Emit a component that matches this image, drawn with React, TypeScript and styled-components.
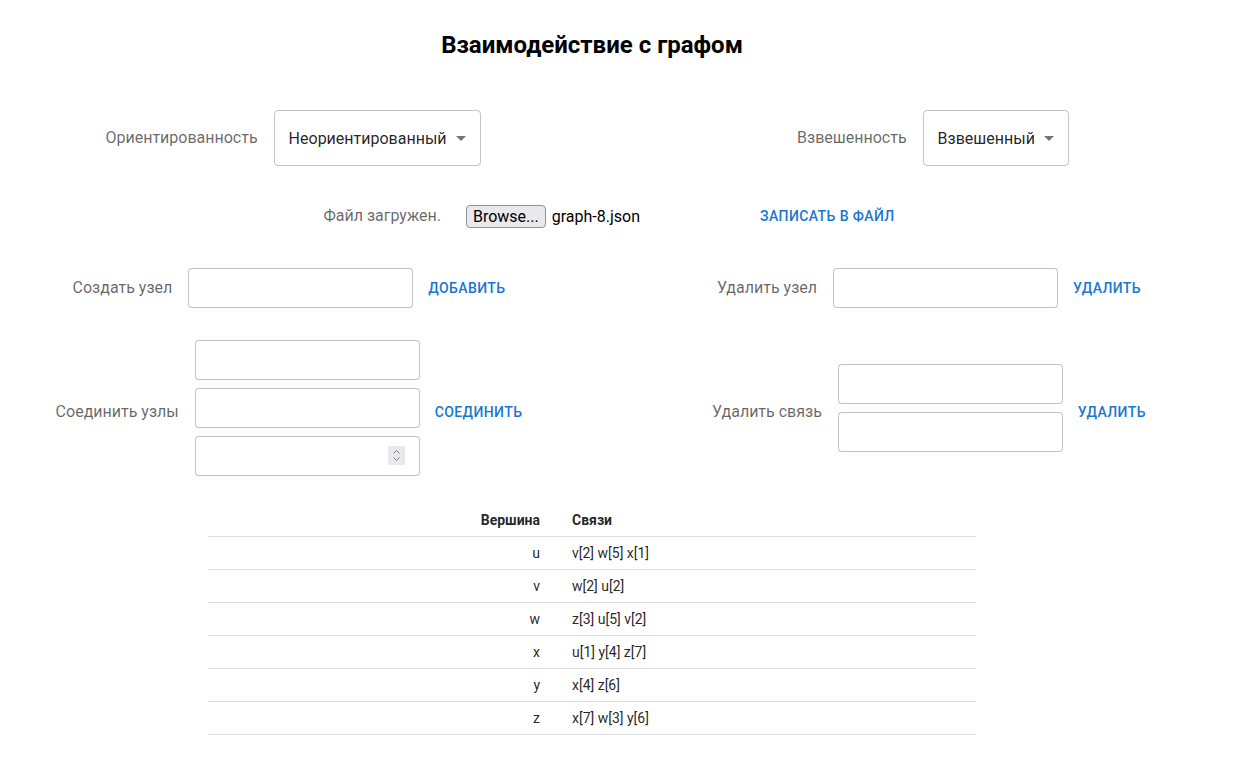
import React from 'react';
import styled, { createGlobalStyle } from 'styled-components';

const GlobalStyle = createGlobalStyle`
  * { box-sizing: border-box; }
  body {
    margin: 0;
    background: #fff;
    font-family: Roboto, "Noto Sans", sans-serif;
    color: rgba(0, 0, 0, 0.87);
  }
`;

const Page = styled.div`
  width: 1235px;
  padding-top: 29px;
  padding-bottom: 26px;
`;

const Centered = styled.div`
  width: 1184px;
  display: flex;
  flex-direction: column;
  align-items: center;
`;

const Title = styled.h1`
  margin: 0;
  font-size: 24px;
  line-height: 32px;
  font-weight: 700;
  color: #000;
`;

const TwoCols = styled.div<{ $top: number }>`
  display: grid;
  grid-template-columns: 580px 560px;
  column-gap: 70px;
  margin-top: ${p => p.$top}px;
  margin-left: 3px;
`;

const Group = styled.div`
  display: flex;
  align-items: center;
  justify-content: center;
  gap: 16px;
`;

const Label = styled.span`
  font-size: 16px;
  line-height: 24px;
  color: rgba(0, 0, 0, 0.6);
  white-space: nowrap;
`;

const SelectBox = styled.div`
  position: relative;
  height: 56px;
  display: flex;
  align-items: center;
  padding: 0 33px 0 14px;
  border: 1px solid rgba(0, 0, 0, 0.23);
  border-radius: 4px;
  font-size: 16px;
  color: rgba(0, 0, 0, 0.87);
  white-space: nowrap;
`;

const Arrow = styled.svg`
  position: absolute;
  right: 7px;
  top: 50%;
  margin-top: -12px;
  width: 24px;
  height: 24px;
  fill: rgba(0, 0, 0, 0.54);
`;

const FileRow = styled.div`
  display: flex;
  align-items: center;
  justify-content: center;
  height: 40px;
  margin-top: 30px;
  padding-right: 9px;
`;

const FileLabel = styled(Label)`
  margin-right: 25px;
`;

const BrowseButton = styled.button`
  height: 23px;
  padding: 0 6px;
  font-family: Roboto, sans-serif;
  font-size: 16px;
  color: #000;
  background: #e9e9ed;
  border: 1px solid #8f8f9d;
  border-radius: 4px;
`;

const FileName = styled.span`
  margin-left: 6px;
  font-size: 16px;
  color: #000;
`;

const TextButton = styled.button<{ $offset?: number }>`
  margin-left: ${p => p.$offset ?? -9}px;
  padding: 6px 8px;
  background: none;
  border: none;
  border-radius: 4px;
  font-family: Roboto, sans-serif;
  font-size: 14px;
  font-weight: 500;
  line-height: 24px;
  letter-spacing: 0.4px;
  text-transform: uppercase;
  color: #1976d2;
  white-space: nowrap;
  cursor: pointer;
`;

const InputStack = styled.div`
  display: flex;
  flex-direction: column;
  gap: 8px;
  padding-bottom: 8px;
`;

const FieldWrap = styled.div`
  position: relative;
  width: 225px;
  height: 40px;
`;

const Input = styled.input`
  width: 100%;
  height: 100%;
  padding: 8.5px 14px;
  border: 1px solid rgba(0, 0, 0, 0.23);
  border-radius: 4px;
  font-family: Roboto, sans-serif;
  font-size: 16px;
  outline: none;
  appearance: textfield;
  &::-webkit-inner-spin-button,
  &::-webkit-outer-spin-button {
    -webkit-appearance: none;
    margin: 0;
  }
`;

const Spinner = styled.svg`
  position: absolute;
  right: 15px;
  top: 10px;
  width: 17px;
  height: 19px;
  pointer-events: none;
`;

const Table = styled.table`
  margin-top: 20px;
  width: 768px;
  border-collapse: collapse;
  font-size: 14px;
  line-height: 20px;
`;

const Cell = styled.td<{ $head?: boolean; $right?: boolean }>`
  padding: 6px 16px;
  border-bottom: 1px solid rgb(224, 224, 224);
  text-align: ${p => (p.$right ? 'right' : 'left')};
  font-weight: ${p => (p.$head ? 700 : 400)};
  color: rgba(0, 0, 0, 0.87);
  &:first-child { width: 348px; }
`;

const rows: [string, string][] = [
  ['u', 'v[2] w[5] x[1]'],
  ['v', 'w[2] u[2]'],
  ['w', 'z[3] u[5] v[2]'],
  ['x', 'u[1] y[4] z[7]'],
  ['y', 'x[4] z[6]'],
  ['z', 'x[7] w[3] y[6]'],
];

function Select({ value }: { value: string }) {
  return (
    <SelectBox>
      {value}
      <Arrow viewBox="0 0 24 24">
        <path d="M7 10l5 5 5-5z" />
      </Arrow>
    </SelectBox>
  );
}

function Field({ number }: { number?: boolean }) {
  return (
    <FieldWrap>
      <Input type={number ? 'number' : 'text'} />
      {number && (
        <Spinner viewBox="0 0 17 19">
          <rect width="17" height="19" fill="#e9e9ed" />
          <path d="M5.5 7.5l3-3 3 3M5.5 11.5l3 3 3-3" fill="none" stroke="#808080" strokeWidth="1" />
        </Spinner>
      )}
    </FieldWrap>
  );
}

export default function App() {
  return (
    <Page>
      <GlobalStyle />
      <Centered>
        <Title>Взаимодействие с графом</Title>
      </Centered>

      <TwoCols $top={49}>
        <Group>
          <Label>Ориентированность</Label>
          <Select value="Неориентированный" />
        </Group>
        <Group>
          <Label>Взвешенность</Label>
          <Select value="Взвешенный" />
        </Group>
      </TwoCols>

      <FileRow>
        <FileLabel>Файл загружен.</FileLabel>
        <BrowseButton>Browse...</BrowseButton>
        <FileName>graph-8.json</FileName>
        <TextButton $offset={112}>Записать в файл</TextButton>
      </FileRow>

      <TwoCols $top={32}>
        <Group>
          <Label>Создать узел</Label>
          <Field />
          <TextButton>Добавить</TextButton>
        </Group>
        <Group>
          <Label>Удалить узел</Label>
          <Field />
          <TextButton>Удалить</TextButton>
        </Group>
      </TwoCols>

      <TwoCols $top={32}>
        <Group>
          <Label>Соединить узлы</Label>
          <InputStack>
            <Field />
            <Field />
            <Field number />
          </InputStack>
          <TextButton>Соединить</TextButton>
        </Group>
        <Group>
          <Label>Удалить связь</Label>
          <InputStack>
            <Field />
            <Field />
          </InputStack>
          <TextButton>Удалить</TextButton>
        </Group>
      </TwoCols>

      <Centered>
        <Table>
          <thead>
            <tr>
              <Cell as="th" $head $right>Вершина</Cell>
              <Cell as="th" $head>Связи</Cell>
            </tr>
          </thead>
          <tbody>
            {rows.map(([node, links]) => (
              <tr key={node}>
                <Cell $right>{node}</Cell>
                <Cell>{links}</Cell>
              </tr>
            ))}
          </tbody>
        </Table>
      </Centered>
    </Page>
  );
}
